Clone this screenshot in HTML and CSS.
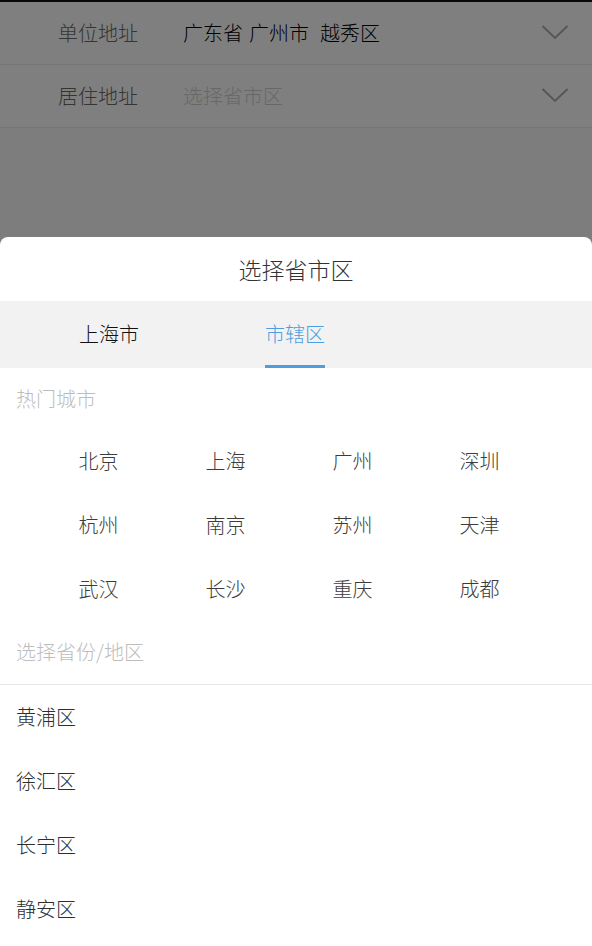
FILE: index.html
```html
<!DOCTYPE html>
<html lang="zh-CN">
<head>
<meta charset="utf-8">
<title>选择省市区</title>
<link rel="stylesheet" href="styles.css">
</head>
<body>
<div class="page">
  <div class="statusbar"></div>
  <div class="form">
    <div class="row">
      <span class="label">单位地址</span>
      <span class="value"><span class="seg">广东省</span><span class="seg">广州市</span><span class="seg wide">越秀区</span></span>
      <svg class="chev" width="28" height="16" viewBox="0 0 28 16"><path d="M1.5 2 L14 14 L26.5 2" fill="none" stroke="#aaa" stroke-width="1.8"/></svg>
    </div>
    <div class="row">
      <span class="label">居住地址</span>
      <span class="value placeholder">选择省市区</span>
      <svg class="chev" width="28" height="16" viewBox="0 0 28 16"><path d="M1.5 2 L14 14 L26.5 2" fill="none" stroke="#aaa" stroke-width="1.8"/></svg>
    </div>
  </div>
</div>
<div class="mask"></div>
<div class="sheet">
  <div class="title">选择省市区</div>
  <div class="tabs">
    <div class="tab">上海市</div>
    <div class="tab active">市辖区</div>
  </div>
  <div class="section">热门城市</div>
  <div class="hot">
    <div class="city">北京</div>
    <div class="city">上海</div>
    <div class="city">广州</div>
    <div class="city">深圳</div>
    <div class="city">杭州</div>
    <div class="city">南京</div>
    <div class="city">苏州</div>
    <div class="city">天津</div>
    <div class="city">武汉</div>
    <div class="city">长沙</div>
    <div class="city">重庆</div>
    <div class="city">成都</div>
  </div>
  <div class="section bordered">选择省份/地区</div>
  <div class="list">
    <div class="item">黄浦区</div>
    <div class="item">徐汇区</div>
    <div class="item">长宁区</div>
    <div class="item">静安区</div>
  </div>
</div>
</body>
</html>
```

FILE: styles.css
```css
* { box-sizing: border-box; }
html, body {
  margin: 0;
  padding: 0;
}
body {
  width: 592px;
  height: 946px;
  overflow: hidden;
  font-family: "Noto Sans CJK SC", "Noto Sans", sans-serif;
  font-size: 20px;
  font-weight: 300;
  background: #fafafa;
}
.page {
  height: 946px;
}
.statusbar {
  height: 2px;
  background: #111;
}
.form {
  background: #fff;
}
.row {
  display: flex;
  align-items: center;
  height: 63px;
  border-bottom: 1px solid #ececec;
}
.label {
  width: 183px;
  padding-left: 58px;
  color: #6a6a6a;
  line-height: 1;
}
.value {
  flex: 1;
  color: #000;
  line-height: 1;
}
.seg { margin-right: 6px; }
.seg.wide { margin-left: 5px; }
.placeholder { color: #cfcfcf; }
.chev {
  margin-right: 23px;
  margin-top: -2px;
}
.mask {
  position: fixed;
  left: 0; top: 0; right: 0; bottom: 0;
  background: rgba(0,0,0,0.5);
}
.sheet {
  position: fixed;
  left: 0; right: 0; top: 237px; bottom: 0;
  background: #fff;
  border-radius: 8px 8px 0 0;
  display: flex;
  flex-direction: column;
}
.title {
  height: 64px;
  display: flex;
  align-items: center;
  justify-content: center;
  color: #333;
  font-size: 23px;
}
.tabs {
  height: 67px;
  background: #f2f2f2;
  display: flex;
  padding-left: 79px;
  gap: 126px;
}
.tab {
  height: 67px;
  display: flex;
  align-items: center;
  padding-bottom: 3px;
  color: #111;
}
.tab.active {
  color: #4f9ddf;
  border-bottom: 3px solid #4f9ddf;
  padding-bottom: 0;
}
.section {
  height: 60px;
  display: flex;
  align-items: center;
  padding-left: 16px;
  color: #bdbdbd;
}
.section.bordered {
  height: 65px;
  padding-bottom: 2px;
  border-bottom: 1px solid #e6e6e6;
}
.hot {
  display: grid;
  grid-template-columns: repeat(4, 127px);
  grid-auto-rows: 64px;
  padding-left: 35px;
}
.city {
  display: flex;
  align-items: center;
  justify-content: center;
  color: #3c3c3c;
}
.item {
  height: 64px;
  display: flex;
  align-items: center;
  padding-left: 16px;
  padding-bottom: 2px;
  color: #2e2e2e;
}
```
